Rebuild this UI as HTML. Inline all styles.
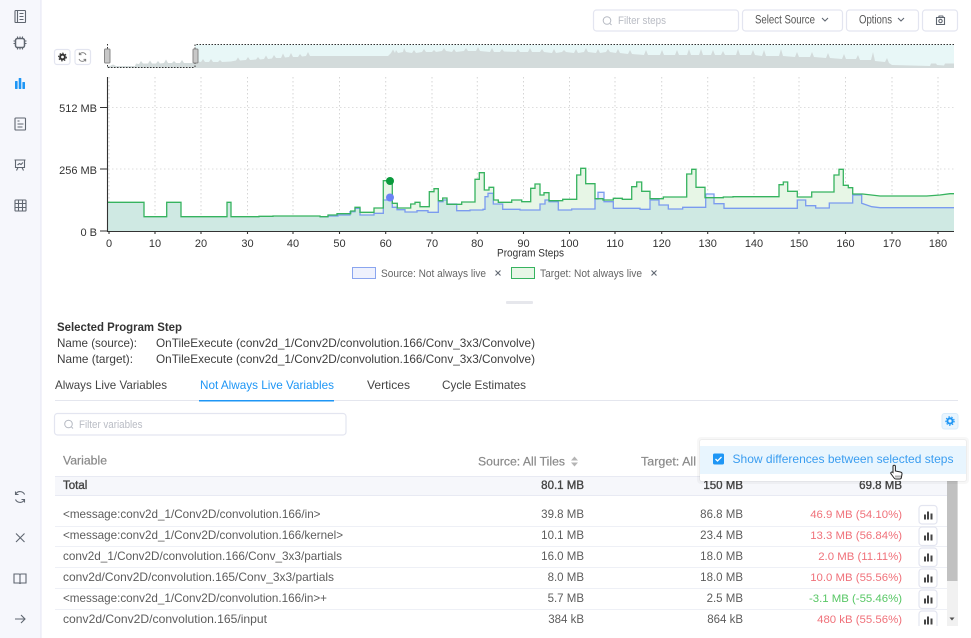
<!DOCTYPE html>
<html><head><meta charset="utf-8"><style>
html,body{margin:0;padding:0;background:#fff;width:971px;height:638px;overflow:hidden}
svg{display:block}
text{font-family:"Liberation Sans",sans-serif;font-size:11px;fill:#555}
.ax{fill:#333;font-size:11px}
.btn{fill:#fff;stroke:#e3e5f0;stroke-width:1.2}
.ic{fill:none;stroke:#5f6670;stroke-width:1.1}
.r{text-anchor:end}
.row{font-size:12px;fill:#5c5c5c}
.num{font-size:11.5px;fill:#5c5c5c}
.hd{font-size:11.5px;fill:#8a8a8a;stroke:#8a8a8a;stroke-width:.2}
.tot{font-size:11.5px;fill:#444;stroke:#444;stroke-width:.35}
.red{font-size:11.4px;fill:#f0717a}
.sep{stroke:#eef0f6;stroke-width:1}
.g{stroke:#d5d5d5;stroke-width:1;stroke-dasharray:1.5 2.5}
.t{font-size:12px;fill:#3d3d3d}
</style></head><body>
<svg width="971" height="638" viewBox="0 0 971 638" xmlns="http://www.w3.org/2000/svg">
<defs>
<clipPath id="gc"><path d="M107.5 202.3H144V216.7H166.7V202.3H181V216.7H227V202.3H231V216.7H259V216.3H273V216H320V216.7H328V215H337V213.7H350.7V211H355V207.3H360V212.3H374V208H383.3V180.7H392.3V203.3H397.3V208H410.7V204H415V202.3H420V206.7H429.3V191.7H434V188.7H438.3V200.7H442.7V198H447V204.3H461.7V202H475V179.3H479.3V172.7H484.3V190H489V187.3H493.7V200H498.3V202.3H511.7V200H521.7V201.7H530.7V188.3H535V184H540V195H544V192.7H549V200.7H562.7V199.3H576.7V175H580.7V168.3H585.7V183.7H595V198.7H603V200H613.3V198.3H622.3V199.3H631.7V186.7H636.7V182H641.7V191.3H650V198.7H663.3V197H686.7V174H691.7V169.3H696V187.3H705V197.7H723.3V197H733V196.7H779V184.7H783.3V182H787.7V191.3H797.3V197H811.7V192H834V175H839V169.3H843.3V185.3H848.3V187.7H852.7V194H862.7L880 196H926.7L940 195L950 193.7H954V231H107.5Z"/></clipPath>
</defs>
<!-- sidebar -->
<rect x="0" y="0" width="40.5" height="638" fill="#f6f7fc"/>
<rect x="40.5" y="0" width="1" height="638" fill="#e4e6f3"/>
<g class="ic">
<rect x="15" y="10.5" width="10.5" height="12" rx=".8"/><path d="M17.5 10.5v12M19.5 13.5h4M19.5 16.5h4M19.5 19.5h4"/>
<rect x="15.5" y="38.5" width="9" height="9" rx="2" stroke-width="1.5"/><path d="M17.5 36.5v2M20 36.5v2M22.5 36.5v2M17.5 47.5v2M20 47.5v2M22.5 47.5v2M13.5 41h2M13.5 43.5h2M24.5 41h2M24.5 43.5h2"/>
<rect x="15" y="118" width="10.5" height="12" rx=".8"/><path d="M17.5 121h2M17.5 124h6M17.5 127h5"/>
<path d="M14.5 160h11M15.5 160v7.5h9V160M18 167.5l-1.5 3M22 167.5l1.5 3M17.5 165l2-1.5 1.5 1 2-2"/>
<rect x="15" y="200" width="11" height="11" rx=".8"/><path d="M15 203.5h11M15 207.5h11M18.5 200v11M22.5 200v11"/>
<path d="M24.6 494.5a5 5 0 0 0-8.8-.5M15.5 499.5a5 5 0 0 0 8.8.5M15.5 491.5v3h3M24.5 502.500v-3h-3"/>
<path d="M16 533.5l8.5 8.5M24.5 533.5L16 542"/>
<path d="M14 574v9h5c.6 0 1 .4 1 1 0-.6.4-1 1-1h5v-9h-5c-.6 0-1 .4-1 1 0-.6-.4-1-1-1zM20 575v9"/>
<path d="M15 619h10M21 615l4 4-4 4"/>
</g>
<g fill="#1e96f5"><rect x="15" y="81" width="2.6" height="8" rx=".6"/><rect x="18.7" y="78" width="2.6" height="11" rx=".6"/><rect x="22.4" y="82" width="2.6" height="7" rx=".6"/></g>

<!-- toolbar -->
<rect class="btn" x="593.5" y="10" width="145" height="21" rx="3"/>
<circle cx="607" cy="20.5" r="3.8" fill="none" stroke="#b5b9c2"/><path d="M610 23.5l1.5 1.5" stroke="#b5b9c2" fill="none"/>
<text x="618" y="24" textLength="48" lengthAdjust="spacingAndGlyphs" style="font-size:11px;fill:#b9bcc4">Filter steps</text>
<rect class="btn" x="742.5" y="10" width="100" height="21" rx="3"/>
<text x="755" y="23.5" textLength="60" lengthAdjust="spacingAndGlyphs" style="font-size:11.500px;fill:#555">Select Source</text><path class="ic" d="M822 18l3 3 3-3"/>
<rect class="btn" x="846.5" y="10" width="72" height="21" rx="3"/>
<text x="859" y="23.5" textLength="33" lengthAdjust="spacingAndGlyphs" style="font-size:11.500px;fill:#555">Options</text><path class="ic" d="M898 18l3 3 3-3"/>
<rect class="btn" x="922.5" y="10" width="35" height="21" rx="3"/>
<path class="ic" d="M936.5 17.5h8v7h-8zM938.500 17.5l.7-1.5h3.5l.7 1.5"/><circle class="ic" cx="940.5" cy="21" r="1.7"/>

<!-- minimap -->
<rect x="195" y="44.5" width="759" height="23.5" fill="#e8f7f7"/>
<path fill="#d3dbdb" d="M107 68V66L110 66 113 64.5 116 66 135 66 136 63.5 139 64 141 61 143 63.5 148 63.500 150 60.5 152 63.5 156 63.5 158 61 160 63.5 164 63 166 59.5 168 63 172 63 174 61 176 63 180 63 182 60 184 63 195 63 196 60 198 61.5 201 62 203 59 205 62 209 62 211 59 213 62 218 62 220 60 222 62 231 61.5 236 60.5 238 57.500 240 60.5 246 60 248 57 250 60 256 59.5 258 57 260 59.5 264 59 266 55.500 268 59 272 58.5 274 55 276 58 281 58 283 53.5 285 57.5 289 57 291 53 293 57 298 57 300 54 302 56.5 306 56 308 52 310 56 388 56 391 53 393 49.5 395 53 396 50 398 53 403 52 404 48 406 52 412 53 414 50 416 53 422 52 424 49 426 52 432 52 434 50 436 52 442 51 444 48 446 51 452 52 454 49 456 52 464 51 466 48 468 51 476 51 478 47 480 51 490 52 492 48 494 52 500 52 502 49 504 51.500 516 52 518 49 520 52 528 52 530 48 532 52 540 52 542 49 544 52 552 53 554 49 556 53 562 52 564 50 566 52 574 53 576 49 578 53 584 52 586 48 588 52 596 53 598 49 600 53 606 52 608 49 610 52 616 53 618 49 620 53 628 54 630 50 632 54 644 55 646 50 648 55 660 55 662 50 664 55 675 55 677 50 679 55 687 55 689 49 691 55 699 55 701 49 703 55 711 55 713 50 715 55 721 55 723 51 725 55 736 55 738 49 740 55 751 55 753 50 755 55 762 56 764 50 766 56 779 56 781 49 783 56 795 57 797 52 799 57 810 57 812 52 814 57 826 58 828 53 830 58 842 59 844 54 846 59 856 59 858 55 860 60 871 60 873 52 875 61 885 62 887 58 889 63 892 65 930 66 931 63.5 936 63.5 937 65 944 65.5 945 63.500 954 63.5V68Z"/>
<path d="M107.5 44v23.5H195M195 67V44.5H954" fill="none" stroke="#333" stroke-width="1" stroke-dasharray="1.5 1.500"/>
<rect x="104.5" y="49" width="5.5" height="14" rx="1" fill="#c8c8c8" stroke="#888"/>
<rect x="193" y="49" width="5" height="14" rx="1" fill="#c8c8c8" stroke="#888"/>
<rect x="54.5" y="49.5" width="15.5" height="15" rx="2.5" class="btn"/>
<circle cx="62.5" cy="57" r="2.4" fill="none" stroke="#333" stroke-width="2"/><circle cx="62.5" cy="57" r="3.9" fill="none" stroke="#333" stroke-width="1" stroke-dasharray="1.5 1.5"/>
<rect x="75" y="49.5" width="15.5" height="15" rx="2.5" class="btn"/>
<path d="M86 55a3.6 3.6 0 0 0-6.5-.5M79 59a3.6 3.6 0 0 0 6.5.5M79.3 52.5v2.2h2.2M85.7 61.5v-2.2h-2.2" fill="none" stroke="#777" stroke-width=".9"/>

<!-- grid -->
<g class="g"><path d="M109 77v154M155 77v154M201 77v154M247.5 77v154M293 77v154M339.5 77v154M385.7 77v154M432 77v154M477.3 77v154M523.5 77v154M569.5 77v154M615 77v154M661.7 77v154M707.7 77v154M754 77v154M799 77v154M845.5 77v154M892 77v154M938 77v154"/></g>
<path d="M108 107.5H954M108 169H954" stroke="#dedede" stroke-dasharray="1.5 2.5" fill="none"/>

<!-- areas -->
<path fill="#e7f6e6" d="M107.5 202.3H144V216.7H166.7V202.3H181V216.7H227V202.3H231V216.7H259V216.3H273V216H320V216.7H328V215H337V213.7H350.7V211H355V207.3H360V212.3H374V208H383.3V180.7H392.3V203.3H397.3V208H410.7V204H415V202.3H420V206.7H429.3V191.7H434V188.7H438.3V200.7H442.7V198H447V204.3H461.7V202H475V179.3H479.3V172.7H484.3V190H489V187.3H493.7V200H498.3V202.3H511.7V200H521.7V201.7H530.7V188.3H535V184H540V195H544V192.7H549V200.7H562.7V199.3H576.7V175H580.7V168.3H585.7V183.7H595V198.7H603V200H613.3V198.3H622.3V199.3H631.7V186.7H636.7V182H641.7V191.3H650V198.7H663.3V197H686.7V174H691.7V169.3H696V187.3H705V197.7H723.3V197H733V196.7H779V184.7H783.3V182H787.7V191.3H797.3V197H811.7V192H834V175H839V169.3H843.3V185.3H848.3V187.7H852.7V194H862.7L880 196H926.7L940 195L950 193.7H954V231H107.5Z"/>
<path fill="#e9edfd" d="M107.5 202.3H144V216.7H166.7V202.3H181V216.7H227V202.3H231V216.7H259V216.3H273V216H320V216.7H328V216H338V215H350V211.7H355V208.3H360V215H374V213.3H383.3V200H392.3V207.3H397V209.7H405V212H417V210.7H428V212.3H438.3V201.7H443V200H447V204H456.7V210.7H470V210H483V209.3H485V196.7H488V193.3H493.3V204H502.7V209.3H520V210H540V204H545V200H549V201.7H558.3V210H571.7V209H595V199H598V192.3H604V201.7H613.3V208.3H640V209.3H650V200H659V205H668.3V209H682.7V207.3H705.7V194H714V203.7H724V208.3H797.3V200H805.7V205.7H815.7V208H829.3V203H852.7V195H861.7V203.3L871.7 206.7L880 207.7H954V231H107.5Z"/>
<path clip-path="url(#gc)" fill="#cfe9e3" d="M107.5 202.3H144V216.7H166.7V202.3H181V216.7H227V202.3H231V216.7H259V216.3H273V216H320V216.7H328V216H338V215H350V211.7H355V208.3H360V215H374V213.3H383.3V200H392.3V207.3H397V209.7H405V212H417V210.7H428V212.3H438.3V201.7H443V200H447V204H456.7V210.7H470V210H483V209.3H485V196.7H488V193.3H493.3V204H502.7V209.3H520V210H540V204H545V200H549V201.7H558.3V210H571.7V209H595V199H598V192.3H604V201.7H613.3V208.3H640V209.3H650V200H659V205H668.3V209H682.7V207.3H705.7V194H714V203.7H724V208.3H797.3V200H805.7V205.7H815.7V208H829.3V203H852.7V195H861.7V203.3L871.7 206.7L880 207.7H954V231H107.5Z"/>
<path fill="none" stroke="#7b9bef" stroke-width="1.3" d="M320 216.7H328V216H338V215H350V211.7H355V208.3H360V215H374V213.3H383.3V200H392.3V207.3H397V209.7H405V212H417V210.7H428V212.3H438.3V201.7H443V200H447V204H456.7V210.7H470V210H483V209.3H485V196.7H488V193.3H493.3V204H502.7V209.3H520V210H540V204H545V200H549V201.7H558.3V210H571.7V209H595V199H598V192.3H604V201.7H613.3V208.3H640V209.3H650V200H659V205H668.3V209H682.7V207.3H705.7V194H714V203.7H724V208.3H797.3V200H805.7V205.7H815.7V208H829.3V203H852.7V195H861.7V203.3L871.7 206.7L880 207.7H954"/>
<path fill="none" stroke="#36b35f" stroke-width="1.3" d="M107.5 202.3H144V216.7H166.7V202.3H181V216.7H227V202.3H231V216.7H259V216.3H273V216H320V216.7H328V215H337V213.7H350.7V211H355V207.3H360V212.3H374V208H383.3V180.7H392.3V203.3H397.3V208H410.7V204H415V202.3H420V206.7H429.3V191.7H434V188.7H438.3V200.7H442.7V198H447V204.3H461.7V202H475V179.3H479.3V172.7H484.3V190H489V187.3H493.7V200H498.3V202.3H511.7V200H521.7V201.7H530.7V188.3H535V184H540V195H544V192.7H549V200.7H562.7V199.3H576.7V175H580.7V168.3H585.7V183.7H595V198.7H603V200H613.3V198.3H622.3V199.3H631.7V186.7H636.7V182H641.7V191.3H650V198.7H663.3V197H686.7V174H691.7V169.3H696V187.3H705V197.7H723.3V197H733V196.7H779V184.7H783.3V182H787.7V191.3H797.3V197H811.7V192H834V175H839V169.3H843.3V185.3H848.3V187.7H852.7V194H862.7L880 196H926.7L940 195L950 193.7H954"/>
<circle cx="390" cy="181" r="4" fill="#0a9a3c"/><circle cx="390" cy="197.5" r="4" fill="#6b83f5"/>

<!-- axes -->
<path d="M107.5 77V231.5H954M100 107.5h7M100 169h7M100 231h7M109 231v3M155 231v3M201 231v3M247.5 231v3M293 231v3M339.5 231v3M385.7 231v3M432 231v3M477.3 231v3M523.5 231v3M569.5 231v3M615 231v3M661.7 231v3M707.7 231v3M754 231v3M799 231v3M845.5 231v3M892 231v3M938 231v3" fill="none" stroke="#333" stroke-width="1.1"/>
<text x="97" y="112" class="ax r">512 MB</text><text x="97" y="174" class="ax r">256 MB</text><text x="97" y="236" class="ax r">0 B</text>
<g style="text-anchor:middle"><text x="109" y="247" class="ax">0</text><text x="155" y="247" class="ax">10</text><text x="201" y="247" class="ax">20</text><text x="247.5" y="247" class="ax">30</text><text x="293" y="247" class="ax">40</text><text x="339.5" y="247" class="ax">50</text><text x="385.7" y="247" class="ax">60</text><text x="432" y="247" class="ax">70</text><text x="477.3" y="247" class="ax">80</text><text x="523.5" y="247" class="ax">90</text><text x="569.5" y="247" class="ax">100</text><text x="615" y="247" class="ax">110</text><text x="661.7" y="247" class="ax">120</text><text x="707.7" y="247" class="ax">130</text><text x="754" y="247" class="ax">140</text><text x="799" y="247" class="ax">150</text><text x="845.5" y="247" class="ax">160</text><text x="892" y="247" class="ax">170</text><text x="938" y="247" class="ax">180</text></g>
<text x="497" y="256.500" class="ax" textLength="67" lengthAdjust="spacingAndGlyphs" style="font-size:11px">Program Steps</text>

<!-- legend -->
<rect x="352.5" y="267.5" width="23" height="11" fill="#eef1fd" stroke="#8aa5ef"/>
<text x="381" y="277" textLength="105" lengthAdjust="spacingAndGlyphs" style="font-size:11px;fill:#666">Source: Not always live</text>
<path d="M495.5 270.5l5 5M500.5 270.5l-5 5" class="ic" stroke-width=".9"/>
<rect x="511.5" y="267.5" width="23" height="11" fill="#e7f6e6" stroke="#36b35f"/>
<text x="540" y="277" textLength="102" lengthAdjust="spacingAndGlyphs" style="font-size:11px;fill:#666">Target: Not always live</text>
<path d="M651.5 270.5l5 5M656.5 270.5l-5 5" class="ic" stroke-width=".9"/>
<rect x="506" y="301" width="27" height="3" rx="1" fill="#e6e7ec"/>

<!-- selected step -->
<text x="57" y="331" style="font-size:12px;font-weight:bold;fill:#333" textLength="125" lengthAdjust="spacingAndGlyphs">Selected Program Step</text>
<text x="57" y="347" class="t" textLength="80" lengthAdjust="spacingAndGlyphs">Name (source):</text>
<text x="57" y="363" class="t" textLength="76" lengthAdjust="spacingAndGlyphs">Name (target):</text>
<text x="156" y="347" class="t" textLength="379" lengthAdjust="spacingAndGlyphs">OnTileExecute (conv2d_1/Conv2D/convolution.166/Conv_3x3/Convolve)</text>
<text x="156" y="363" class="t" textLength="379" lengthAdjust="spacingAndGlyphs">OnTileExecute (conv2d_1/Conv2D/convolution.166/Conv_3x3/Convolve)</text>

<!-- tabs -->
<text x="55" y="389" style="font-size:12px;fill:#444" textLength="112" lengthAdjust="spacingAndGlyphs">Always Live Variables</text>
<text x="200" y="389" style="font-size:12px;fill:#1e96f5" textLength="134" lengthAdjust="spacingAndGlyphs">Not Always Live Variables</text>
<text x="367" y="389" style="font-size:12px;fill:#444" textLength="43" lengthAdjust="spacingAndGlyphs">Vertices</text>
<text x="442" y="389" style="font-size:12px;fill:#444" textLength="84" lengthAdjust="spacingAndGlyphs">Cycle Estimates</text>
<rect x="55" y="400" width="903" height="1" fill="#e4e6ee"/>
<rect x="199" y="400" width="135" height="1.5" fill="#1e96f5"/>

<!-- filter var -->
<rect class="btn" x="54.5" y="413.5" width="291.5" height="21.5" rx="3"/>
<circle cx="68.5" cy="424" r="3.8" fill="none" stroke="#b5b9c2"/><path d="M71.5 427l1.5 1.5" stroke="#b5b9c2" fill="none"/>
<text x="79" y="428" textLength="63.500" lengthAdjust="spacingAndGlyphs" style="font-size:11px;fill:#b9bcc4">Filter variables</text>
<!-- gear -->
<rect x="942" y="413.5" width="16" height="15.5" rx="2.5" fill="#e9f5fe" stroke="#d6ebfb"/>
<circle cx="950" cy="421" r="2.6" fill="none" stroke="#1e96f5" stroke-width="2"/><circle cx="950" cy="421" r="4.2" fill="none" stroke="#1e96f5" stroke-width="1" stroke-dasharray="1.5 1.5"/>

<!-- table -->
<text x="63" y="464.5" class="hd" textLength="44" lengthAdjust="spacingAndGlyphs">Variable</text>
<text x="478" y="465.5" class="hd" textLength="87" lengthAdjust="spacingAndGlyphs">Source: All Tiles</text>
<path d="M574.5 456.500l3.5 4h-7zM574.5 466.5l3.5-4h-7z" fill="#b5b5b5"/>
<text x="641" y="465.5" class="hd" textLength="55" lengthAdjust="spacingAndGlyphs">Target: All</text>
<rect x="55" y="476" width="892" height="20" fill="#f6f7fb"/>
<path d="M55 476.5H947M55 495.5H947" stroke="#e8eaf3"/>
<text x="63" y="489" class="tot">Total</text>
<text x="584" y="489" class="tot r">80.1 MB</text>
<text x="743" y="489" class="tot r">150 MB</text>
<text x="902" y="489" class="tot r">69.8 MB</text>

<path class="sep" d="M55 526.5H947M55 546.5H947M55 567.5H947M55 588.5H947M55 609.5H947"/>
<text x="63" y="518" class="row" textLength="257.5" lengthAdjust="spacingAndGlyphs">&lt;message:conv2d_1/Conv2D/convolution.166/in&gt;</text>
<text x="63" y="539" class="row" textLength="280" lengthAdjust="spacingAndGlyphs">&lt;message:conv2d_1/Conv2D/convolution.166/kernel&gt;</text>
<text x="63" y="560" class="row" textLength="279" lengthAdjust="spacingAndGlyphs">conv2d_1/Conv2D/convolution.166/Conv_3x3/partials</text>
<text x="63" y="581" class="row" textLength="271" lengthAdjust="spacingAndGlyphs">conv2d/Conv2D/convolution.165/Conv_3x3/partials</text>
<text x="63" y="602" class="row" textLength="264" lengthAdjust="spacingAndGlyphs">&lt;message:conv2d_1/Conv2D/convolution.166/in&gt;+</text>
<text x="63" y="623" class="row" textLength="204" lengthAdjust="spacingAndGlyphs">conv2d/Conv2D/convolution.165/input</text>

<text x="584" y="518" class="num r">39.8 MB</text><text x="584" y="539" class="num r">10.1 MB</text><text x="584" y="560" class="num r">16.0 MB</text><text x="584" y="581" class="num r">8.0 MB</text><text x="584" y="602" class="num r">5.7 MB</text><text x="584" y="623" class="num r">384 kB</text>
<text x="743" y="518" class="num r">86.8 MB</text><text x="743" y="539" class="num r">23.4 MB</text><text x="743" y="560" class="num r">18.0 MB</text><text x="743" y="581" class="num r">18.0 MB</text><text x="743" y="602" class="num r">2.5 MB</text><text x="743" y="623" class="num r">864 kB</text>
<text x="902" y="518" class="red r">46.9 MB (54.10%)</text>
<text x="902" y="539" class="red r">13.3 MB (56.84%)</text>
<text x="902" y="560" class="red r">2.0 MB (11.11%)</text>
<text x="902" y="581" class="red r">10.0 MB (55.56%)</text>
<text x="902" y="602" class="r" style="font-size:11.4px;fill:#58c765">-3.1 MB (-55.46%)</text>
<text x="902" y="623" class="red r">480 kB (55.56%)</text>

<g>
<rect class="btn" x="919" y="505.5" width="18" height="18.5" rx="3"/><path d="M924 514.500h2v5h-2zM927 511.500h2v8h-2zM930.5 513.5h2v6h-2z" fill="#444"/>
<rect class="btn" x="919" y="527" width="18" height="18.5" rx="3"/><path d="M924 535.5h2v5h-2zM927 532.5h2v8h-2zM930.5 534.5h2v6h-2z" fill="#444"/>
<rect class="btn" x="919" y="548" width="18" height="18.5" rx="3"/><path d="M924 556.5h2v5h-2zM927 553.5h2v8h-2zM930.5 555.5h2v6h-2z" fill="#444"/>
<rect class="btn" x="919" y="569" width="18" height="18.5" rx="3"/><path d="M924 577.5h2v5h-2zM927 574.5h2v8h-2zM930.5 576.5h2v6h-2z" fill="#444"/>
<rect class="btn" x="919" y="590" width="18" height="18.5" rx="3"/><path d="M924 598.5h2v5h-2zM927 595.5h2v8h-2zM930.5 597.5h2v6h-2z" fill="#444"/>
<rect class="btn" x="919" y="611" width="18" height="18.5" rx="3"/><path d="M924 619.5h2v5h-2zM927 616.5h2v8h-2zM930.5 618.5h2v6h-2z" fill="#444"/>
</g>
<rect x="55" y="626" width="890" height="12" fill="#fff"/>

<!-- scrollbar -->
<rect x="947" y="481" width="11" height="145" fill="#f1f1f1"/>
<rect x="947" y="481" width="10.5" height="100" fill="#c1c1c1"/>
<path d="M949.5 617.5h5l-2.500 3z" fill="#505050"/>

<!-- popover -->
<rect x="697" y="437" width="272" height="47" rx="4" fill="#000" opacity=".03"/>
<rect x="699" y="439" width="268" height="43" rx="3" fill="#000" opacity=".04"/>
<rect x="700" y="440" width="266" height="41" rx="2" fill="#fff"/>
<rect x="700" y="446" width="266" height="28" fill="#e8f5fe"/>
<rect x="713" y="453.5" width="11" height="11" rx="1.5" fill="#1e96f5"/>
<path d="M715.5 459l2 2 4-4" fill="none" stroke="#fff" stroke-width="1.3"/>
<text x="732.5" y="463" style="font-size:12px;fill:#3a9df0" textLength="221" lengthAdjust="spacingAndGlyphs">Show differences between selected steps</text>
<!-- cursor -->
<path d="M893 466.5a1.2 1.2 0 0 1 2.4 0v4.5l5 1c1 .2 1.700 1 1.600 2l-.6 3.5c-.2 1-.7 1.5-1.600 1.5h-4c-.8 0-1.300-.4-1.700-1l-3-4c-1-1.500 .7-2.600 1.900-1.500v-6z" fill="#fff" stroke="#222" stroke-width="1"/>
<path d="M896 475.500v2M898 475.500v2M900 475.500v2" stroke="#222" stroke-width=".7"/>
</svg>
</body></html>
